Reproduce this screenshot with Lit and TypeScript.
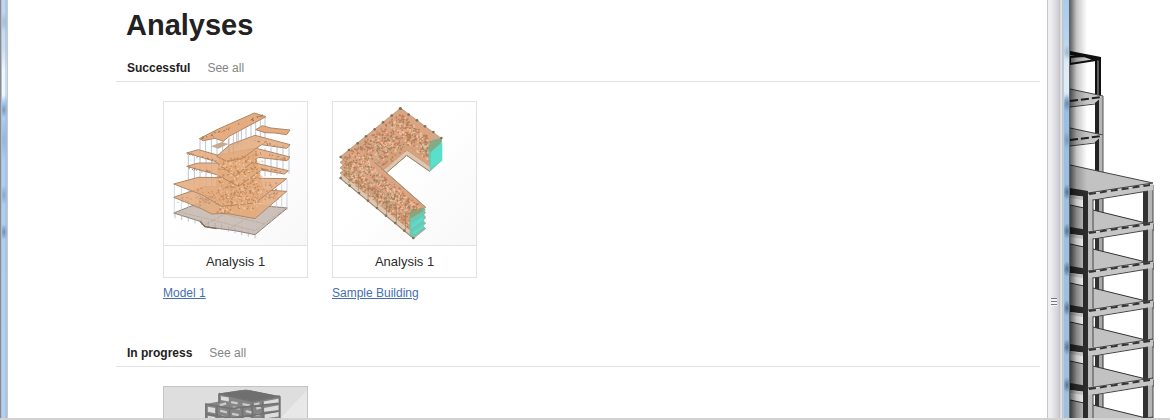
import { LitElement, html, svg, css } from "lit";
import { customElement, property } from "lit/decorators.js";

type Pt = [number, number];
const pts = (list: Pt[], dy = 0) => list.map(([x, y]) => `${x},${y + dy}`).join(" ");

/** Small repeatable pseudo-random source for the mesh speckle. */
function random(seed: number) {
  let s = seed;
  return () => {
    s = (s * 16807) % 2147483647;
    return s / 2147483647;
  };
}

/** Short strokes scattered along a strip that runs from a to b. */
function speckle(a: Pt, b: Pt, spreadY: number, count: number, seed: number) {
  const r = random(seed);
  let d = "";
  for (let i = 0; i < count; i++) {
    const t = r();
    const x = a[0] + (b[0] - a[0]) * t;
    const y = a[1] + (b[1] - a[1]) * t + r() * spreadY;
    d += `M${x.toFixed(1)} ${y.toFixed(1)}l${(r() * 12 - 6).toFixed(1)} ${(r() * 9 - 4).toFixed(1)}`;
  }
  return d;
}

function columns(list: Pt[], len: number) {
  return list.map(([x, y]) => `M${x} ${y}v${len}`).join("");
}

function along(a: Pt, b: Pt, n: number): Pt[] {
  return Array.from({ length: n + 1 }, (_, i) => [
    Math.round(a[0] + ((b[0] - a[0]) * i) / n),
    Math.round(a[1] + ((b[1] - a[1]) * i) / n),
  ] as Pt);
}

const TERRACE_PLATES: Pt[][] = [
  [[56, 308], [150, 275], [395, 290], [300, 372], [215, 356], [170, 358], [135, 340]],
  [[56, 268], [130, 248], [395, 252], [300, 325], [200, 335], [140, 300]],
  [[95, 215], [130, 205], [300, 205], [400, 228], [388, 238], [320, 226], [250, 275], [185, 240]],
  [[95, 175], [130, 165], [190, 182], [300, 160], [405, 187], [395, 198], [310, 188], [240, 245], [180, 200]],
  [[185, 185], [225, 150], [300, 122], [405, 150], [395, 161], [320, 150], [260, 192], [215, 200]],
];

const terrace = svg`
  <polygon points="56,355 150,318 397,340 300,420 240,408 150,396 135,380" fill="#cfc0b6" stroke="#8d8078" stroke-width="3"/>
  <path d="M66 350L300 408L388 344M110 335L330 388M150 390L260 330M220 405L330 335" stroke="#b9a69a" stroke-width="2" fill="none"/>
  <path d="${columns([...along([58, 270], [290, 325], 11), ...along([302, 325], [396, 255], 6)], 92)}" stroke="#b9c6d8" stroke-width="2"/>
  <path d="${columns([...along([100, 180], [170, 200], 4), ...along([330, 160], [402, 152], 4)], 85)}" stroke="#b9c6d8" stroke-width="3"/>
  <path d="${columns([...along([135, 135], [220, 132], 5), ...along([245, 100], [330, 68], 6)], 62)}" stroke="#b9c6d8" stroke-width="3"/>
  <path d="${columns(along([60, 355], [300, 415], 12), 16)}" stroke="#a5a5a5" stroke-width="2"/>
  <path d="M168 155L200 142L220 148L190 162Z" fill="#c5aa90"/>
  <path d="M190 190L300 170L330 300L300 370L210 358L180 300Z" fill="#dfa97d"/>
  ${TERRACE_PLATES.map((p) => svg`<polygon points="${pts(p)}" fill="#e4ac80" fill-opacity="0.88" stroke="#b08766" stroke-width="3"/>`)}
  <polygon points="302,105 322,93 348,100 405,106 395,120 360,115 330,114" fill="#e4ac80" stroke="#b08766" stroke-width="3"/>
  <polygon points="133,132 190,103 298,55 333,66 222,125 205,140 180,131 145,138" fill="#e4ac80" stroke="#b08766" stroke-width="3"/>
  <path d="M222 125V175M235 118V178M250 108V150" stroke="#b9a38f" stroke-width="2"/>
  <path d="${speckle([190, 195], [310, 175], 165, 190, 41)}" stroke="#c68654" stroke-width="4"/>
  <path d="${speckle([130, 278], [370, 260], 55, 120, 77)}" stroke="#bd8862" stroke-width="3"/>
  <path d="${speckle([190, 205], [320, 190], 155, 110, 93)}" stroke="#f3cba7" stroke-width="4"/>
  <path d="${speckle([70, 308], [370, 292], 20, 60, 97)}" stroke="#c59573" stroke-width="3"/>
  <path d="${speckle([100, 175], [180, 195], 6, 14, 19)}" stroke="#b07a52" stroke-width="3"/>
  <path d="${speckle([100, 215], [180, 232], 6, 14, 21)}" stroke="#b07a52" stroke-width="3"/>
  <path d="${speckle([300, 135], [400, 155], 6, 16, 27)}" stroke="#b07a52" stroke-width="3"/>
  <path d="${speckle([300, 170], [400, 192], 6, 16, 33)}" stroke="#b07a52" stroke-width="3"/>
  <path d="${speckle([300, 215], [395, 232], 6, 16, 39)}" stroke="#b07a52" stroke-width="3"/>
  <path d="${speckle([145, 128], [320, 60], 6, 26, 12)}" stroke="#94714f" stroke-width="3"/>
  <path d="M135 380L150 396L185 402" stroke="#76695f" stroke-width="4" fill="none"/>`;

const ARM_FOOTPRINT: Pt[] = [
  [48, 187], [230, 40], [353, 132], [317, 166], [248, 118], [150, 201], [305, 338], [268, 368],
];

const wings = svg`
  ${[64, 48, 32, 16, 0].map((dy) => svg`
    <polygon points="${pts(ARM_FOOTPRINT, dy)}" fill="${dy === 64 ? "#e3cbb7" : "#d9a583"}" stroke="#a88a6b" stroke-width="2"/>`)}
  <path d="M60 200V240L268 415V368ZM150 201L248 118V170L188 222ZM248 118L317 166V215L248 168Z" fill="#d3a17c" fill-opacity="0.75"/>
  <path d="${speckle([60, 185], [230, 52], 68, 150, 5)}" stroke="#c27b57" stroke-width="5"/>
  <path d="${speckle([62, 200], [265, 366], 44, 170, 9)}" stroke="#c27b57" stroke-width="5"/>
  <path d="${speckle([115, 185], [292, 338], 42, 150, 11)}" stroke="#c27b57" stroke-width="5"/>
  <path d="${speckle([232, 55], [325, 135], 75, 110, 15)}" stroke="#c27b57" stroke-width="5"/>
  <path d="${speckle([170, 130], [250, 75], 90, 80, 17)}" stroke="#c27b57" stroke-width="5"/>
  <path d="${speckle([60, 190], [240, 60], 90, 100, 23)}" stroke="#8d8a68" stroke-width="4"/>
  <path d="${speckle([60, 208], [265, 370], 44, 80, 29)}" stroke="#8d8a68" stroke-width="4"/>
  <path d="${speckle([110, 190], [285, 338], 44, 80, 53)}" stroke="#8d8a68" stroke-width="4"/>
  <path d="${speckle([240, 75], [315, 135], 60, 45, 43)}" stroke="#8d8a68" stroke-width="4"/>
  <path d="${speckle([80, 190], [240, 60], 90, 100, 31)}" stroke="#efc09c" stroke-width="5"/>
  <path d="${speckle([70, 205], [265, 360], 48, 90, 37)}" stroke="#efc09c" stroke-width="5"/>
  <path d="${speckle([115, 188], [288, 338], 42, 90, 59)}" stroke="#efc09c" stroke-width="5"/>
  <path d="${speckle([240, 65], [318, 130], 75, 60, 47)}" stroke="#efc09c" stroke-width="5"/>
  <path d="M52 238L268 415V429L48 250ZM186 222L248 168L317 216V229L248 181L188 234Z" fill="#dfc6b0"/>
  <path d="M48 250L268 430M188 234L248 182L317 230" stroke="#9b8367" stroke-width="3" fill="none"/>
  <path d="M150 201L305 338" stroke="#a88a6b" stroke-width="3"/>
  <path d="${columns([...along([75, 215], [245, 355], 6)], 50)}" stroke="#8c7c5e" stroke-opacity=".6" stroke-width="3"/>
  <path d="M312 162L325 135L353 130V198L318 230Z" fill="#68c9b4"/>
  <path d="M322 170L355 145V198L320 220Z" fill="#5adfcd"/>
  <path d="M312 160L322 138L353 130V142L318 174Z" fill="#86aa83"/>
  <path d="M257 368L300 338L305 345L298 356L305 366L298 376L305 386L298 392L304 402L268 430L257 420Z" fill="#6fc7b2"/>
  <path d="M262 388L298 364V376L262 402ZM266 412L300 388V396L268 420Z" fill="#5adccb"/>
  <path d="M255 352L300 338L296 350L258 372Z" fill="#8fa37b"/>
  ${[...along([230, 42], [352, 130], 5), ...along([50, 187], [228, 42], 7), ...along([50, 250], [268, 430], 8)].map(
    ([x, y]) => svg`<circle cx="${x}" cy="${y}" r="4" fill="#7d735d"/>`
  )}`;

const frameTower = svg`
  <path d="M0 0H437V437H0Z" fill="#dedede"/>
  <path d="M437 10V437H200L352 100Z" fill="#e8e8e8"/>
  <path d="M168 20L250 8L355 28V300H128V52L168 44Z" fill="#858585"/>
  <path d="M174 28L198 32V44L174 40ZM134 60L156 64V80L134 76ZM134 88L156 92V106H134ZM304 44L350 36V50L304 56ZM306 64L350 56V70L306 76ZM308 84L350 76V90L308 96Z" fill="#dcdcdc"/>
  <path d="M170 56L190 50M205 46L225 50M240 52L262 56M275 54L292 50M172 72L192 78M210 62L232 66M250 74L270 78M282 66L296 62M176 90L188 94M208 82L228 86M244 92L264 96M280 86L294 82" stroke="#cbcbcb" stroke-width="7"/>
  <path d="M168 20L235 10L262 10L355 28L270 42Z" fill="#6f6f6f"/>
  <path d="M168 20V48M128 50V300M162 56V300M200 70V300M240 60V300M270 50V300M302 44V300M354 28V300M168 20L270 44L354 28M128 52L205 66L350 50M128 82L205 96L350 74" stroke="#727272" stroke-width="5" fill="none"/>`;

const ART: Record<string, { box: string; art: unknown }> = {
  terrace: { box: "27 22 429 429", art: terrace },
  wings: { box: "27 22 429 429", art: wings },
  frame: { box: "0 0 437 437", art: frameTower },
};

@customElement("analysis-card")
export class AnalysisCard extends LitElement {
  @property() art = "terrace";
  @property() label = "";
  @property() model = "";

  static styles = css`
    :host { display: block; width: 145px; }
    .card { border: 1px solid #e2e2e2; background: #fff; box-sizing: border-box; }
    .card.pending { border-color: #c4c4c4; }
    .thumb {
      display: block; width: 100%; aspect-ratio: 1;
      background: linear-gradient(135deg, #fff 45%, #f8f8f8);
    }
    .label {
      border-top: 1px solid #e2e2e2; text-align: center;
      font-size: 13px; line-height: 31px; color: #2b2b2b;
    }
    .model {
      display: inline-block; margin-top: 7px;
      font-size: 12px; line-height: 16px; color: #4670ad; white-space: nowrap;
    }
  `;

  render() {
    const { box, art } = ART[this.art];
    return html`
      <div class="card ${this.label ? "" : "pending"}">
        <svg class="thumb" viewBox=${box} aria-hidden="true">${art}</svg>
        ${this.label ? html`<div class="label">${this.label}</div>` : ""}
      </div>
      ${this.model ? html`<a class="model" href="#">${this.model}</a>` : ""}
    `;
  }
}

const STOREY = 39;

/** One storey of the concrete frame, hanging from the beam whose left end is at y. */
function storey(y: number) {
  return svg`
    <path d="M0 ${y + 14}L14 ${y + 17}V${y + 40}H0Z" fill="url(#wall)"/>
    <path d="M0 ${y + 14}L14 ${y + 17}" stroke="#333"/>
    <path d="M26 ${y + 8}H33V${y + 24}H26Z" fill="#aaa"/>
    <path d="M25 ${y + 8}H29V${y + 23}H25Z" fill="#333"/>
    <path d="M33 ${y + 8}V${y + 24}" stroke="#333"/>
    <path d="M23 ${y + 19}L76 ${y + 32}L23 ${y + 40}Z" fill="#c2c2c2"/>
    <path d="M23 ${y + 19}L76 ${y + 32}" stroke="#333"/>
    <path d="M73 ${y}H78V${y + 40}H73Z" fill="#333"/>
    <path d="M78 ${y - 4}H83V${y + 40}H78Z" fill="#b4b4b4"/>
    <path d="M83 ${y - 6}V${y + 40}" stroke="#444"/>
    <path d="M13 ${y}H18V${y + 42}H13Z" fill="#2c2c2c"/>
    <path d="M18 ${y}H23V${y + 42}H18Z" fill="#bdbdbd"/>
    <path d="M23 ${y + 8}V${y + 42}" stroke="#444"/>`;
}

function beam(y: number) {
  return svg`
    <path d="M0 ${y - 3}L18 ${y}V${y + 6}L0 ${y + 4}Z" fill="#2f2f2f"/>
    <path d="M0 ${y + 4}L13 ${y + 6}V${y + 9}L0 ${y + 7}Z" fill="#ddd"/>
    <path d="M18 ${y + 3}L83 ${y - 7}V${y - 1}L18 ${y + 9}Z" fill="#c6c6c6"/>
    <path d="M23 ${y + 9}L78 ${y}" stroke="#444"/>
    <path d="M18 ${y + 2}L83 ${y - 8}" stroke="#444" stroke-width="1"/>
    <path d="M19 ${y + 3}L80 ${y - 6}" stroke="#333" stroke-width="2" stroke-dasharray="7 4"/>`;
}

@customElement("app-root")
export class AppRoot extends LitElement {
  static styles = css`
    :host {
      display: block; height: 100vh; overflow: hidden; box-sizing: border-box;
      border-bottom: 2px solid #d2d2d2; background: #fff;
      font-family: "Liberation Sans", Arial, sans-serif; color: #222;
    }
    .desktop { display: grid; grid-template-columns: 8px 1fr 17px 6px 100px; height: 100%; }
    .edge {
      background:
        linear-gradient(90deg, #858b94 0 1px, #b5bfcb 1px 2px, transparent 2px 5px, #8fb4dc66 5px 7px, #c3cad2 7px 8px),
        radial-gradient(4px 8px at 4px 110px, #5f7fa3b0, #5f7fa300),
        radial-gradient(4px 22px at 4px 140px, #7b9bc080, #7b9bc000),
        radial-gradient(4px 10px at 4px 195px, #6889ad90, #6889ad00),
        radial-gradient(4px 8px at 4px 232px, #4f6f93b0, #4f6f9300),
        radial-gradient(4px 10px at 4px 22px, #8fa5c090, #8fa5c000),
        linear-gradient(#bdd5ef, #cfdfef 50px, #f1f6fa 70px, #f1f6fa 95px, #acceef 102px, #b4d2ef);
    }
    .pane { min-height: 0; overflow: hidden; padding: 0 7px 0 108px; }
    h1 { margin: 0; padding: 8px 0 0 10px; height: 46px; font-size: 29px; line-height: 34px; }
    .heading {
      display: flex; align-items: baseline; gap: 17px; box-sizing: border-box;
      height: 28px; padding: 6px 0 0 11px; border-bottom: 1px solid #e2e2e2;
    }
    h2 { margin: 0; font-size: 12px; line-height: 16px; }
    .all { font-size: 12px; line-height: 16px; color: #858585; text-decoration: none; }
    .cards { display: flex; flex-wrap: wrap; gap: 24px; padding: 19px 0 38px 47px; }
    .scroll {
      display: flex; align-items: center; justify-content: center;
      background: linear-gradient(90deg, #c6c6c9 0 1px, #efeff1 1px 2px, #ededf0 4px, #d2d2d7 11px, #bfc0c5 13px, #f4f5f7 14px, #aab4c0 16px, #d5e4f2);
    }
    .grip { width: 6px; height: 8px; margin: 186px 3px 0 0; background: repeating-linear-gradient(#777 0 1px, #f4f4f4 1px 3px); }
    .glass {
      background:
        linear-gradient(90deg, transparent 0 5px, #5c6670 5px),
        radial-gradient(4px 8px at 3px 52px, #8ba3bbb0, #8ba3bb00),
        radial-gradient(4px 9px at 3px 103px, #4c6a89b0, #4c6a8900),
        radial-gradient(4px 9px at 3px 140px, #6885a3b0, #6885a300),
        radial-gradient(4px 8px at 3px 192px, #3c5874c0, #3c587400),
        radial-gradient(4px 8px at 3px 231px, #3c5874c0, #3c587400),
        radial-gradient(4px 8px at 3px 269px, #3c5874c0, #3c587400),
        radial-gradient(4px 8px at 3px 308px, #3c5874c0, #3c587400),
        radial-gradient(4px 8px at 3px 347px, #3c5874c0, #3c587400),
        radial-gradient(4px 8px at 3px 385px, #3c5874c0, #3c587400),
        linear-gradient(#a9cbed, #b7d3ee 40px, #e1ebf4 65px, #e1ebf4 92px, #9abfe4 105px, #a2bfdd);
    }
    .model { overflow: hidden; }
    .model svg { display: block; }
  `;

  private section(title: string, cards: unknown) {
    return html`
      <section>
        <div class="heading"><h2>${title}</h2><a class="all" href="#">See all</a></div>
        <div class="cards">${cards}</div>
      </section>`;
  }

  render() {
    const levels = Array.from({ length: 7 }, (_, i) => 191 + i * STOREY);
    return html`
      <div class="desktop">
        <div class="edge"></div>
        <main class="pane">
          <h1>Analyses</h1>
          ${this.section("Successful", html`
            <analysis-card art="terrace" label="Analysis 1" model="Model 1"></analysis-card>
            <analysis-card art="wings" label="Analysis 1" model="Sample Building"></analysis-card>`)}
          ${this.section("In progress", html`<analysis-card art="frame"></analysis-card>`)}
        </main>
        <div class="scroll"><div class="grip"></div></div>
        <div class="glass"></div>
        <div class="model">
          <svg width="100" height="440" viewBox="0 0 100 440" fill="none" aria-hidden="true">
            <defs>
              <linearGradient id="shade"><stop stop-color="#000" stop-opacity=".62"/><stop offset=".4" stop-color="#000" stop-opacity=".22"/><stop offset="1" stop-color="#000" stop-opacity="0"/></linearGradient>
              <linearGradient id="wall"><stop stop-color="#9b9b9b"/><stop offset="1" stop-color="#c4c4c4"/></linearGradient>
            </defs>
            <path d="M25 96H29V174H25Z" fill="#222"/>
            <path d="M29 96H33V174H29Z" fill="#b5b5b5"/>
            <path d="M33 96V174" stroke="#555"/>
            <path d="M25 58H31V97H25Z" fill="#111"/>
            <path d="M28 60V96" stroke="#aaa"/>
            <path d="M0 51L31 57V61L0 55Z" fill="#111"/>
            <path d="M0 57L14 56L26 60L0 64Z" fill="#ccc" stroke="#111" stroke-width="2"/>
            ${[89, 128].map((y) => svg`
              <path d="M0 ${y}L33 ${y + 7}L25 ${y + 14}L0 ${y + 18}Z" fill="#c6c6c6"/>
              <path d="M0 ${y}L33 ${y + 7}M0 ${y + 18}L25 ${y + 15}" stroke="#444"/>
              <path d="M0 ${y + 12}L32 ${y + 8}" stroke="#222" stroke-width="2" stroke-dasharray="8 3"/>`)}
            ${levels.map((y) => storey(y))}
            <path d="M0 165L83 183L18 193L0 190Z" fill="#c2c2c2"/>
            <path d="M0 165L83 183" stroke="#444"/>
            ${levels.map((y) => beam(y))}
            <rect width="17" height="440" fill="url(#shade)"/>
          </svg>
        </div>
      </div>`;
  }
}
